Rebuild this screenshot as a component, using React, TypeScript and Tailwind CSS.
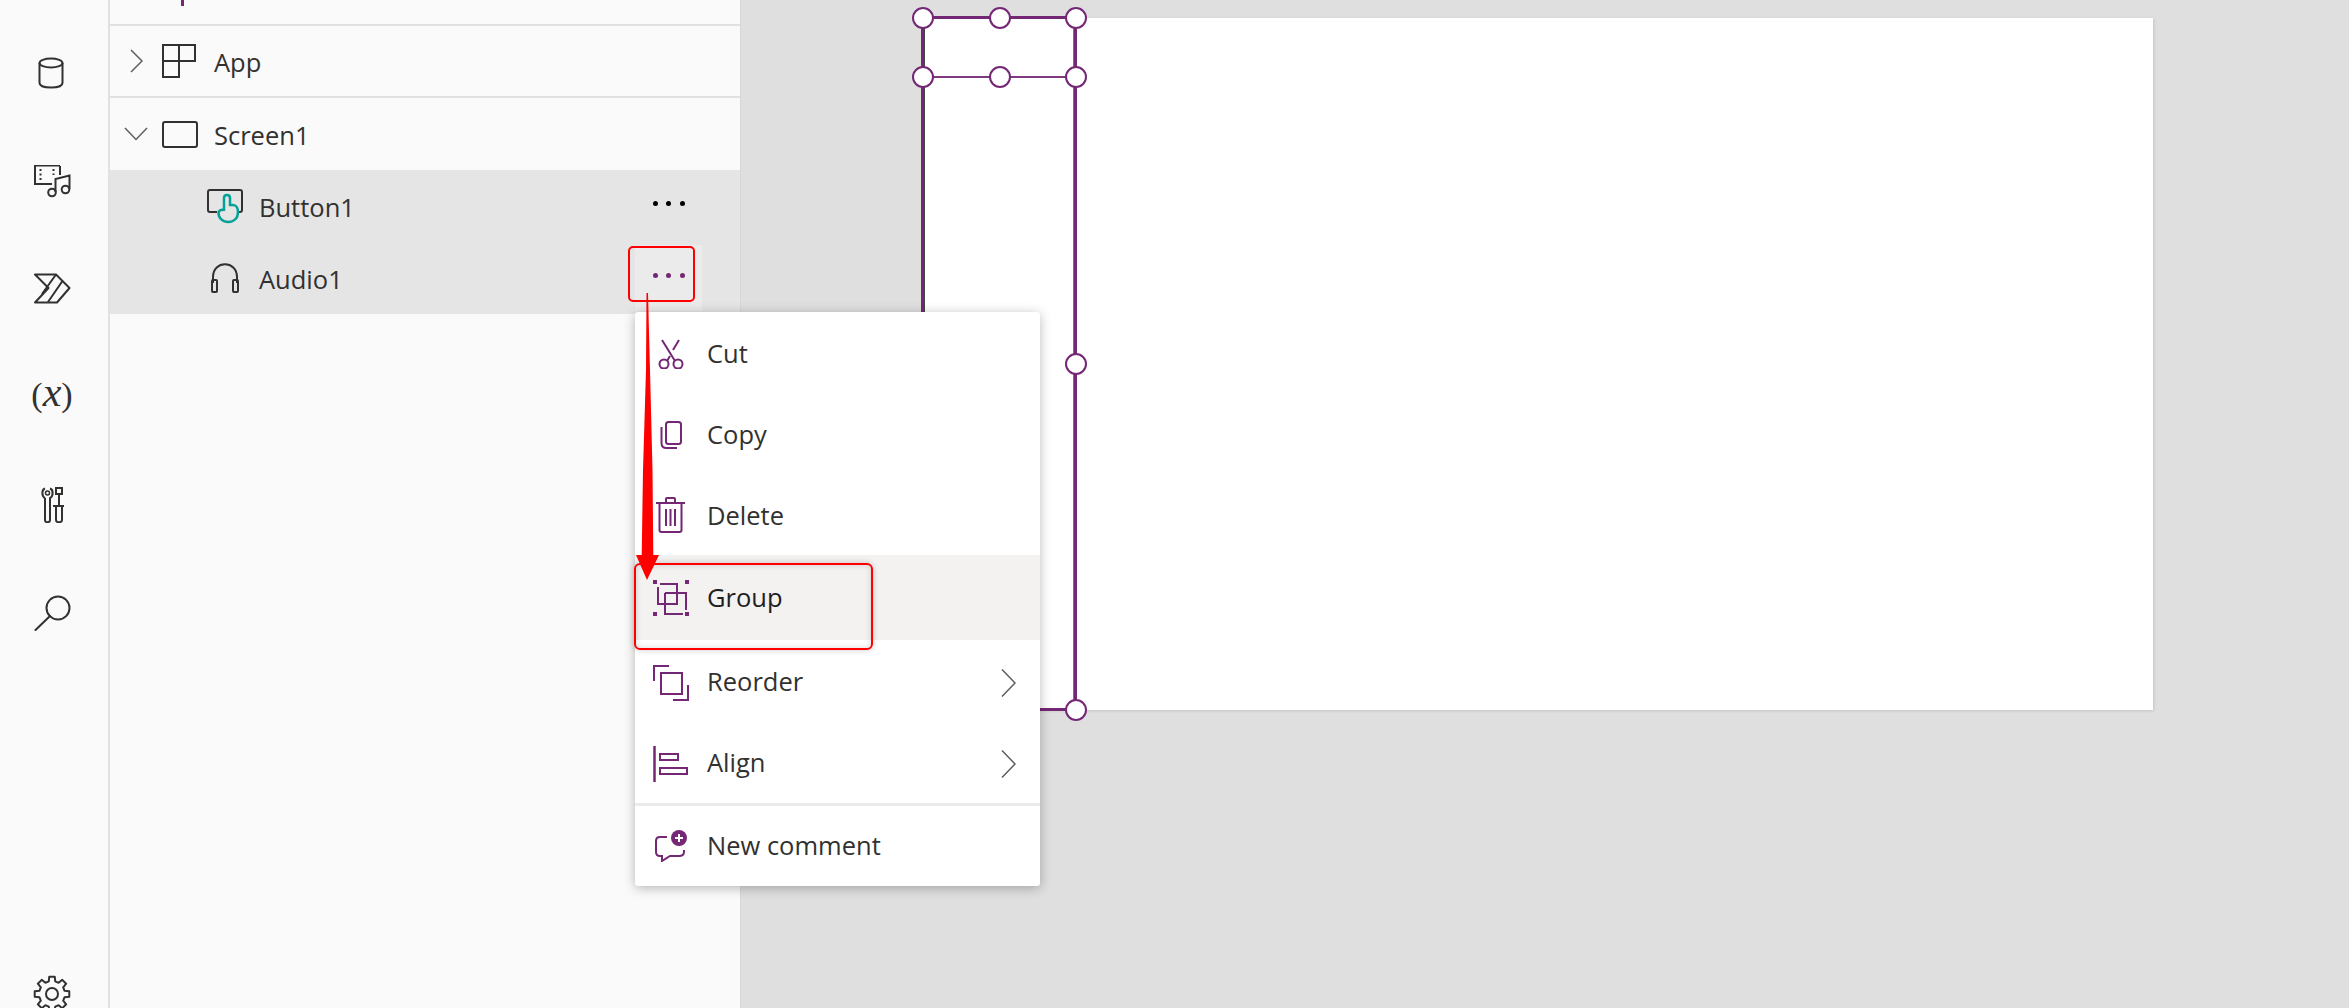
import React from "react";

const P = "#742774";
const D = "#323130";

function gearPath(cx: number, cy: number, rOut: number, rIn: number, teeth: number) {
  const pts: string[] = [];
  const step = (Math.PI * 2) / teeth;
  for (let i = 0; i < teeth; i++) {
    const a = i * step - Math.PI / 2;
    const list: [number, number][] = [
      [rIn, a - step * 0.32],
      [rOut, a - step * 0.2],
      [rOut, a + step * 0.2],
      [rIn, a + step * 0.32],
    ];
    for (const [r, t] of list) pts.push(`${(cx + r * Math.cos(t)).toFixed(2)} ${(cy + r * Math.sin(t)).toFixed(2)}`);
  }
  return "M" + pts.join(" L") + " Z";
}

function Ic({ w, h, c = "", children }: { w: number; h: number; c?: string; children: React.ReactNode }) {
  return (
    <svg width={w} height={h} viewBox={`0 0 ${w} ${h}`} fill="none" className={`block shrink-0 ${c}`}>
      {children}
    </svg>
  );
}

function Handle({ c }: { c: string }) {
  return <div className={`absolute w-[22px] h-[22px] rounded-full bg-white border-[2px] border-[#742774] ${c}`} />;
}

function Chevron() {
  return (
    <Ic w={15} h={28}>
      <path d="M1 0.5 L14 14 L1 27.5" stroke="#605e5c" strokeWidth="1.5" />
    </Ic>
  );
}

function Dots({ c }: { c: string }) {
  return (
    <div className="flex gap-[8.5px]">
      <div className={`w-[5px] h-[5px] rounded-full ${c}`} />
      <div className={`w-[5px] h-[5px] rounded-full ${c}`} />
      <div className={`w-[5px] h-[5px] rounded-full ${c}`} />
    </div>
  );
}

function MenuItem({ icon, label, h, chevron, hover, t = "" }: { icon: React.ReactNode; label: string; h: string; chevron?: boolean; hover?: boolean; t?: string }) {
  return (
    <div className={`flex items-center shrink-0 ${h} ${hover ? "bg-[#f3f2f1] text-[#201f1e]" : "text-[#323130]"}`}>
      <div className="w-[72px] flex justify-center shrink-0">{icon}</div>
      <div className={`flex-1 text-[25.5px] leading-none ${t}`}>{label}</div>
      {chevron && <div className="pr-[24px]"><Chevron /></div>}
    </div>
  );
}

export default function App() {
  return (
    <div className="relative flex w-[2349px] h-[1008px] overflow-hidden bg-[#dfdfdf] font-['Open_Sans',sans-serif]">
      {/* Left rail */}
      <div className="h-full w-[110px] shrink-0 bg-[#fafafa] border-r-[2px] border-[#e1e1e1] flex flex-col items-center overflow-hidden">
        <div className="mt-[57px] ml-[-6px] shrink-0">
          <Ic w={26} h={32}>
            <ellipse cx="13" cy="6" rx="11.5" ry="4.5" stroke={D} strokeWidth="2" />
            <path d="M1.5 6 V26 C1.5 29 7 30.5 13 30.5 C19 30.5 24.5 29 24.5 26 V6" stroke={D} strokeWidth="2" />
          </Ic>
        </div>
        <div className="mt-[76px] ml-[-2px] shrink-0">
          <Ic w={38} h={33}>
            <path d="M26 0.5 H1 V19 H18" stroke={D} strokeWidth="2" />
            <path d="M26 1 V10" stroke={D} strokeWidth="2" />
            <path d="M6.5 4 V17 M19.5 4 V10" stroke={D} strokeWidth="2" strokeDasharray="2 2.5" />
            <circle cx="18" cy="27.5" r="3.8" stroke={D} strokeWidth="2" />
            <circle cx="31.5" cy="24.5" r="3.8" stroke={D} strokeWidth="2" />
            <path d="M21.5 27 V14 L35.5 10.5 V24" stroke={D} strokeWidth="2" />
          </Ic>
        </div>
        <div className="mt-[75px] ml-[-3px] shrink-0">
          <Ic w={37} h={31}>
            <path d="M1 1.5 H22 L35.5 15 L23 29.5 H1 L14.5 15 Z" stroke={D} strokeWidth="2" strokeLinejoin="round" />
            <path d="M22 1.5 L8 21 M28.5 8 L14 29" stroke={D} strokeWidth="2" />
          </Ic>
        </div>
        <div className="mt-[73px] h-[31px] shrink-0 ml-[-4px] flex items-baseline text-[34px] leading-[31px] text-[#323130] font-['Liberation_Serif',serif]">
          <span>(</span><span className="italic text-[42px] leading-[31px]">x</span><span>)</span>
        </div>
        <div className="mt-[79px] ml-[-2px] shrink-0">
          <Ic w={24} h={36}>
            <path d="M4 11 C0.5 9 0.5 2.5 4 1.5 M9 1.5 C12.5 2.5 12.5 9 9 11 V33 C9 36 4 36 4 33 V11" stroke={D} strokeWidth="2" />
            <circle cx="6.5" cy="6" r="2" stroke={D} strokeWidth="1.5" />
            <path d="M15 1 H21 V7 H15 Z M18 7 V18 M12 19 H23 M15 19 V33 C15 36 21 36 21 33 V19" stroke={D} strokeWidth="2" />
          </Ic>
        </div>
        <div className="mt-[72px] ml-[-3px] shrink-0">
          <Ic w={37} h={36}>
            <circle cx="24" cy="13" r="11.5" stroke={D} strokeWidth="2" />
            <path d="M16 21 L1.5 35" stroke={D} strokeWidth="2" strokeLinecap="round" />
          </Ic>
        </div>
        <div className="mt-[344px] ml-[-4px] shrink-0">
          <Ic w={38} h={38}>
            <path d={gearPath(19, 19, 17.5, 13, 8)} stroke={D} strokeWidth="2" strokeLinejoin="round" />
            <circle cx="19" cy="19" r="6" stroke={D} strokeWidth="2" />
          </Ic>
        </div>
      </div>

      {/* Tree panel */}
      <div className="h-full w-[631px] shrink-0 bg-[#fafafa] border-r border-[#d8d8d8] flex flex-col text-[25.5px] leading-none text-[#323130]">
        <div className="h-[26px] border-b-[2px] border-[#e1e1e1] pl-[71px]">
          <div className="w-[3px] h-[6px] bg-[#742774]" />
        </div>
        <div className="h-[72px] border-b-[2px] border-[#e1e1e1] flex items-center pl-[20px]">
          <Ic w={13} h={24}><path d="M1 1 L12 12 L1 23" stroke="#605e5c" strokeWidth="1.5" /></Ic>
          <Ic w={34} h={34} c="ml-[19px]">
            <path d="M1 1 H33 V17 H17 V33 H1 Z M1 17 H17 V1" stroke={D} strokeWidth="2" />
          </Ic>
          <span className="ml-[18px] pt-[4px]">App</span>
        </div>
        <div className="h-[72px] flex items-center pl-[14px]">
          <Ic w={24} h={14}><path d="M1 1 L12 12.5 L23 1" stroke="#605e5c" strokeWidth="1.5" /></Ic>
          <Ic w={36} h={27} c="ml-[14px]"><rect x="1" y="1" width="34" height="25" rx="2" stroke={D} strokeWidth="2" /></Ic>
          <span className="ml-[16px] pt-[4px]">Screen1</span>
        </div>
        <div className="h-[72px] bg-[#e5e5e5] flex items-center pl-[97px] pr-[38px]">
          <Ic w={36} h={35}>
            <path d="M10 23 H3 Q1 23 1 21 V3 Q1 1 3 1 H33 Q35 1 35 3 V21 Q35 23 33 23 H32" stroke={D} strokeWidth="2" />
            <path d="M17 22 V9 C17 5 23 5 23 9 V16 H26 C29 16 31 19 31 23 C31 29 27 33 21.5 33 C15.5 33 11.5 29 11.5 24 C11.5 22 14 20 17 21" stroke="#03a197" strokeWidth="2.5" fill="#e5e5e5" />
          </Ic>
          <span className="ml-[16px] flex-1 pt-[3px]">Button1</span>
          <div className="w-[67px] h-[66px] flex items-center justify-center pb-[6px]">
            <Dots c="bg-black" />
          </div>
        </div>
        <div className="h-[72px] bg-[#e5e5e5] flex items-center pl-[101px] pr-[38px]">
          <Ic w={28} h={30}>
            <path d="M2 20 V14 C2 -3 26 -3 26 14 V20" stroke={D} strokeWidth="2" />
            <rect x="1" y="17" width="5" height="12" rx="1" stroke={D} strokeWidth="2" />
            <rect x="22" y="17" width="5" height="12" rx="1" stroke={D} strokeWidth="2" />
          </Ic>
          <span className="ml-[20px] flex-1 pt-[4px]">Audio1</span>
          <div className="w-[67px] h-[66px] bg-[#ebebeb] flex items-center justify-center pb-[6px]">
            <Dots c="bg-[#742774]" />
          </div>
        </div>
      </div>

      {/* Canvas */}
      <div className="flex-1 pl-[182px] pt-[18px]">
        <div className="relative w-[1230px] h-[692px] bg-white shadow-[1px_1px_3px_rgba(0,0,0,0.12)]">
          <div className="absolute left-[-2px] top-[-2px] w-[156px] h-[695px] border-[3px] border-[#742774] shadow-[inset_1px_0_0_#444,inset_-1px_0_0_#777]" />
          <div className="absolute left-0 top-[58px] w-[153px] h-[2px] bg-[#7f3a7f]" />
          <Handle c="left-[-11px] top-[-11px]" />
          <Handle c="left-[66px] top-[-11px]" />
          <Handle c="left-[142px] top-[-11px]" />
          <Handle c="left-[-11px] top-[48px]" />
          <Handle c="left-[66px] top-[48px]" />
          <Handle c="left-[142px] top-[48px]" />
          <Handle c="left-[142px] top-[335px]" />
          <Handle c="left-[142px] top-[681px]" />
        </div>
      </div>

      {/* Context menu */}
      <div className="absolute left-[635px] top-[312px] w-[405px] h-[574px] bg-white rounded-[3px] shadow-[0_2px_12px_rgba(0,0,0,0.28)] flex flex-col pt-[1px] overflow-hidden">
        <MenuItem h="h-[81px]" label="Cut" icon={
          <Ic w={26} h={30}>
            <path d="M4 1 L17 22 M21 1 L15 11 M9 22 L12 17" stroke={P} strokeWidth="2" />
            <circle cx="6" cy="25" r="4.5" stroke={P} strokeWidth="2" />
            <circle cx="20" cy="25" r="4.5" stroke={P} strokeWidth="2" />
          </Ic>
        } />
        <MenuItem h="h-[81px]" label="Copy" icon={
          <Ic w={22} h={28}>
            <rect x="6" y="1" width="15" height="22" rx="2.5" stroke={P} strokeWidth="2" />
            <path d="M1.5 6 V22 C1.5 25 3.5 27 6.5 27 H17" stroke={P} strokeWidth="2" />
          </Ic>
        } />
        <MenuItem h="h-[80px]" t="pt-[2px]" label="Delete" icon={
          <Ic w={30} h={36}>
            <path d="M0 6 H29 M10 6 V2 Q10 1 11 1 H18 Q19 1 19 2 V6" stroke={P} strokeWidth="2" />
            <path d="M3.5 6 V33 Q3.5 35 5.5 35 H23.5 Q25.5 35 25.5 33 V6" stroke={P} strokeWidth="2" />
            <path d="M10 12 V29 M14.5 12 V29 M19 12 V29" stroke={P} strokeWidth="2" />
          </Ic>
        } />
        <MenuItem h="h-[85px]" hover label="Group" icon={
          <Ic w={36} h={36}>
            <rect x="0" y="0" width="4" height="4" fill={P} /><rect x="32" y="0" width="4" height="4" fill={P} />
            <rect x="0" y="32" width="4" height="4" fill={P} /><rect x="32" y="32" width="4" height="4" fill={P} />
            <path d="M7 4 H24 V24 H5 V7" stroke={P} strokeWidth="2" />
            <path d="M12 13 H33 V30 M30 34 H12 V13" stroke={P} strokeWidth="2" />
          </Ic>
        } />
        <MenuItem h="h-[85px]" chevron t="pb-[2px]" label="Reorder" icon={
          <Ic w={36} h={36}>
            <path d="M16 1 H1 V16" stroke={P} strokeWidth="2" />
            <rect x="8" y="8" width="21" height="21" stroke={P} strokeWidth="2" />
            <path d="M20 35 H35 V20" stroke={P} strokeWidth="2" />
          </Ic>
        } />
        <MenuItem h="h-[78px]" chevron t="pb-[2px]" label="Align" icon={
          <Ic w={36} h={36}>
            <path d="M1.5 0 V36" stroke={P} strokeWidth="2.5" />
            <rect x="7" y="8" width="18" height="6" stroke={P} strokeWidth="2" />
            <rect x="7" y="22" width="27" height="6" stroke={P} strokeWidth="2" />
          </Ic>
        } />
        <div className="h-[3px] shrink-0 bg-[#edebe9]" />
        <MenuItem h="h-[80px]" label="New comment" icon={
          <Ic w={32} h={32}>
            <path d="M12 7 H5 Q1 7 1 11 V22 Q1 26 5 26 H7 V31 L15 26 H24 Q29 26 29 22 V20" stroke={P} strokeWidth="2" />
            <circle cx="24" cy="8" r="8" fill={P} />
            <path d="M20 8 H28 M24 4 V12" stroke="white" strokeWidth="2" />
          </Ic>
        } />
      </div>

      {/* Annotations */}
      <div className="absolute left-[628px] top-[246px] w-[67px] h-[56px] rounded-[5px] border-[2px] border-[#ff0000]" />
      <div className="absolute left-[634px] top-[563px] w-[239px] h-[87px] rounded-[6px] border-[2px] border-[#ff0000] shadow-[0_0_6px_rgba(0,0,0,0.2),inset_0_0_6px_rgba(0,0,0,0.15)]" />
      <svg className="absolute left-[630px] top-[290px]" width="40" height="300" viewBox="0 0 40 300" fill="none">
        <polygon points="16.5,3 18,3 20,80 22.5,180 23.3,265 29,265 17,290 6,265 11.7,265 13,180 16,80" fill="#ff0000" />
      </svg>
    </div>
  );
}
